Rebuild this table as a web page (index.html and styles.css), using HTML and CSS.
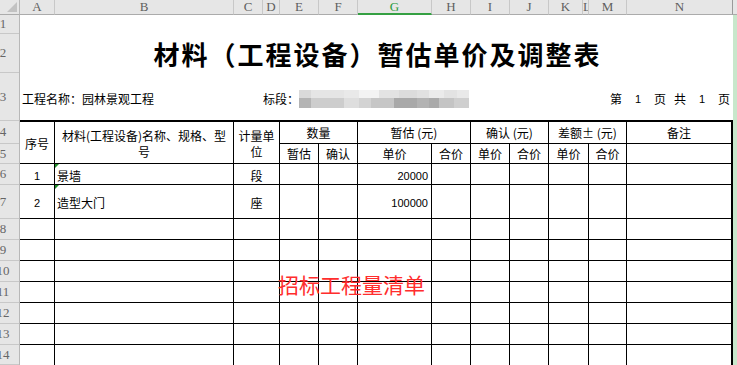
FILE: index.html
```html
<!DOCTYPE html>
<html lang="zh">
<head>
<meta charset="utf-8">
<title>材料（工程设备）暂估单价及调整表</title>
<link rel="stylesheet" href="styles.css">
</head>
<body>
<div class="colbar">
  <div class="ch corner"><span class="corner-tri"></span></div>
  <div class="ch w-a">A</div>
  <div class="ch w-b">B</div>
  <div class="ch w-c">C</div>
  <div class="ch w-d">D</div>
  <div class="ch w-e">E</div>
  <div class="ch w-f">F</div>
  <div class="ch w-g sel">G</div>
  <div class="ch w-h">H</div>
  <div class="ch w-i">I</div>
  <div class="ch w-j">J</div>
  <div class="ch w-k">K</div>
  <div class="ch w-l">L</div>
  <div class="ch w-m">M</div>
  <div class="ch w-n">N</div>
  <div class="ch rest"></div>
</div>
<div class="main">
  <div class="rowbar">
    <div class="rh h19"><span>1</span></div>
    <div class="rh h39"><span>2</span></div>
    <div class="rh h48"><span>3</span></div>
    <div class="rh h23"><span>4</span></div>
    <div class="rh h20"><span>5</span></div>
    <div class="rh h21"><span>6</span></div>
    <div class="rh h34"><span>7</span></div>
    <div class="rh h21"><span>8</span></div>
    <div class="rh h21"><span>9</span></div>
    <div class="rh h21"><span>10</span></div>
    <div class="rh h21"><span>11</span></div>
    <div class="rh h21"><span>12</span></div>
    <div class="rh h21"><span>13</span></div>
    <div class="rh h20"><span>14</span></div>
  </div>
  <div class="canvas">
    <div class="r1"></div>
    <div class="r2">材料（工程设备）暂估单价及调整表</div>
    <div class="r3">
      <div class="proj">工程名称：园林景观工程</div>
      <div class="seg">标段：<span class="blur"></span></div>
      <div class="page"><span>第</span><span class="pn">1</span><span>页</span><span>共</span><span class="pn">1</span><span>页</span></div>
    </div>
    <div class="grid">
      <div class="rs2">序号</div>
      <div class="rs2 two">材料(工程设备)名称、规格、型<br>号</div>
      <div class="rs2 unit">计量单位</div>
      <div class="cs2">数量</div>
      <div class="cs2">暂估 (元)</div>
      <div class="cs2">确认 (元)</div>
      <div class="cs2">差额± (元)</div>
      <div>备注</div>

      <div>暂估</div><div>确认</div><div>单价</div><div>合价</div><div>单价</div><div>合价</div><div>单价</div><div>合价</div><div></div>

      <div class="num d">1</div><div class="l note d">景墙</div><div class="d">段</div><div></div><div></div><div class="num r d">20000</div><div></div><div></div><div></div><div></div><div></div><div></div>
      <div class="num d">2</div><div class="l note d">造型大门</div><div class="d">座</div><div></div><div></div><div class="num r d">100000</div><div></div><div></div><div></div><div></div><div></div><div></div>

      <div></div><div></div><div></div><div></div><div></div><div></div><div></div><div></div><div></div><div></div><div></div><div></div>
      <div></div><div></div><div></div><div></div><div></div><div></div><div></div><div></div><div></div><div></div><div></div><div></div>
      <div></div><div></div><div></div><div></div><div></div><div></div><div></div><div></div><div></div><div></div><div></div><div></div>
      <div></div><div></div><div></div><div></div><div></div><div></div><div></div><div></div><div></div><div></div><div></div><div></div>
      <div></div><div></div><div></div><div></div><div></div><div></div><div></div><div></div><div></div><div></div><div></div><div></div>
      <div></div><div></div><div></div><div></div><div></div><div></div><div></div><div></div><div></div><div></div><div></div><div></div>
      <div></div><div></div><div></div><div></div><div></div><div></div><div></div><div></div><div></div><div></div><div></div><div></div>
    </div>
    <div class="stamp">招标工程量清单</div>
  </div>
  <div class="strip"></div>
</div>
</body>
</html>
```
FILE: styles.css
```css
* { box-sizing: border-box; margin: 0; padding: 0; }
html, body { width: 737px; height: 365px; overflow: hidden; background: #fff; }
body { font-family: "Noto Sans CJK SC", "Liberation Sans", sans-serif; color: #000; }

.colbar { display: flex; height: 15px; background: #e6e6e6; }
.ch {
  height: 15px; flex: none; overflow: hidden;
  border-right: 1px solid #c8c8c8; border-bottom: 1px solid #ababab;
  font: 13px/14px "Liberation Serif", serif; color: #5f5f5f; text-align: center;
}
.corner { width: 20px; display: flex; justify-content: flex-end; padding: 2px 2px 0 0; border-right-color: #b8b8b8; }
.corner-tri { width: 10px; height: 10px; background: #c2c2c2; clip-path: polygon(100% 0, 100% 100%, 0 100%); }
.w-a { width: 35px; } .w-b { width: 179px; } .w-c { width: 29px; } .w-d { width: 17px; }
.w-e { width: 39px; } .w-f { width: 39px; } .w-g { width: 74px; } .w-h { width: 39px; }
.w-i { width: 39px; } .w-j { width: 39px; } .w-k { width: 34px; } .w-l { width: 6px; }
.w-m { width: 38px; } .w-n { width: 106px; border-right-color: #9a9a9a; }
.rest { flex: 1; border-right: 0; }
.sel { color: #2b9a3c; border-bottom: 2px solid #35a043; }

.main { display: flex; height: 350px; overflow: hidden; }
.rowbar { width: 20px; flex: none; background: #e6e6e6; border-right: 1px solid #b8b8b8; display: flex; flex-direction: column; overflow: hidden; }
.rh { flex: none; border-bottom: 1px solid #c8c8c8; overflow: hidden; display: flex; align-items: center; font: 13px/14px "Liberation Serif", serif; color: #666; }
.rh span { flex: none; width: 34px; margin-left: -14px; text-align: center; }
.h19 { height: 19px; } .h39 { height: 39px; } .h48 { height: 48px; } .h23 { height: 23px; }
.h20 { height: 20px; } .h21 { height: 21px; } .h34 { height: 34px; }

.canvas { width: 713px; flex: none; position: relative; }
.r1 { height: 19px; }
.r2 { height: 39px; display: flex; align-items: center; justify-content: center; font-size: 26px; font-weight: 700; letter-spacing: 2px; padding-left: 2px; }
.r3 { height: 47px; display: flex; align-items: center; padding-top: 4px; font-size: 12px; line-height: 14px; }
.proj { width: 243px; flex: none; padding-left: 2px; }
.seg { display: flex; align-items: center; }
.blur {
  width: 170px; height: 18px; display: block;
  background:
    linear-gradient(to right, #dadada 0 12px, #e5e5e5 12px 45px, #e9e9e9 45px 60px, #f3f3f3 60px 80px, #e3e3e3 80px 100px, #dcdcdc 100px 118px, #e1e1e1 118px 130px, #ebebeb 130px 145px, #e3e3e3 145px 158px, #e9e9e9 158px 170px) top / 100% 8px no-repeat,
    linear-gradient(to right, #b4b4b4 0 12px, #cdcdcd 12px 45px, #dedede 45px 60px, #d3d3d3 60px 72px, #c6c6c6 72px 95px, #a9a9a9 95px 118px, #b3b3b3 118px 130px, #aaaaaa 130px 140px, #c4c4c4 140px 155px, #cfcfcf 155px 170px) bottom / 100% 10px no-repeat;
}
.page { margin-left: auto; display: flex; gap: 8px; padding-right: 3px; }
.pn { width: 16px; text-align: center; font-family: "Liberation Sans", sans-serif; font-size: 11px; }

.grid {
  display: grid; width: 713px;
  grid-template-columns: 34px 178px 45px 38px 38px 73px 38px 38px 38px 39px 37px 104px;
  grid-template-rows: 21px 19px 20px 33px repeat(7, 20px);
  gap: 1px; background: #000;
  border-top: 2px solid #000; border-right: 2px solid #000;
}
.grid > div {
  background: #fff; font-size: 12px; line-height: 14px;
  display: flex; align-items: center; justify-content: center; text-align: center;
}
.grid > .rs2 { grid-row: span 2; padding-top: 2px; }
.grid > .two { line-height: 16px; }
.grid > .unit { padding: 2px 3px 0; line-height: 16px; }
.grid > .cs2 { grid-column: span 2; }
.grid > .d { padding-top: 3px; }
.grid > .l { justify-content: flex-start; padding-left: 2px; }
.grid > .r { justify-content: flex-end; padding-right: 3px; }
.grid > .num { font-family: "Liberation Sans", sans-serif; font-size: 11px; }
.note { position: relative; }
.note::before { content: ""; position: absolute; left: 0; top: 0; border-top: 4px solid #1f8f2a; border-right: 4px solid transparent; }

.stamp { position: absolute; left: 258px; top: 259px; font-size: 21px; line-height: 21px; color: #ff2d2d; white-space: nowrap; }
.strip { flex: 1; background: #c8e7cb; }
```
